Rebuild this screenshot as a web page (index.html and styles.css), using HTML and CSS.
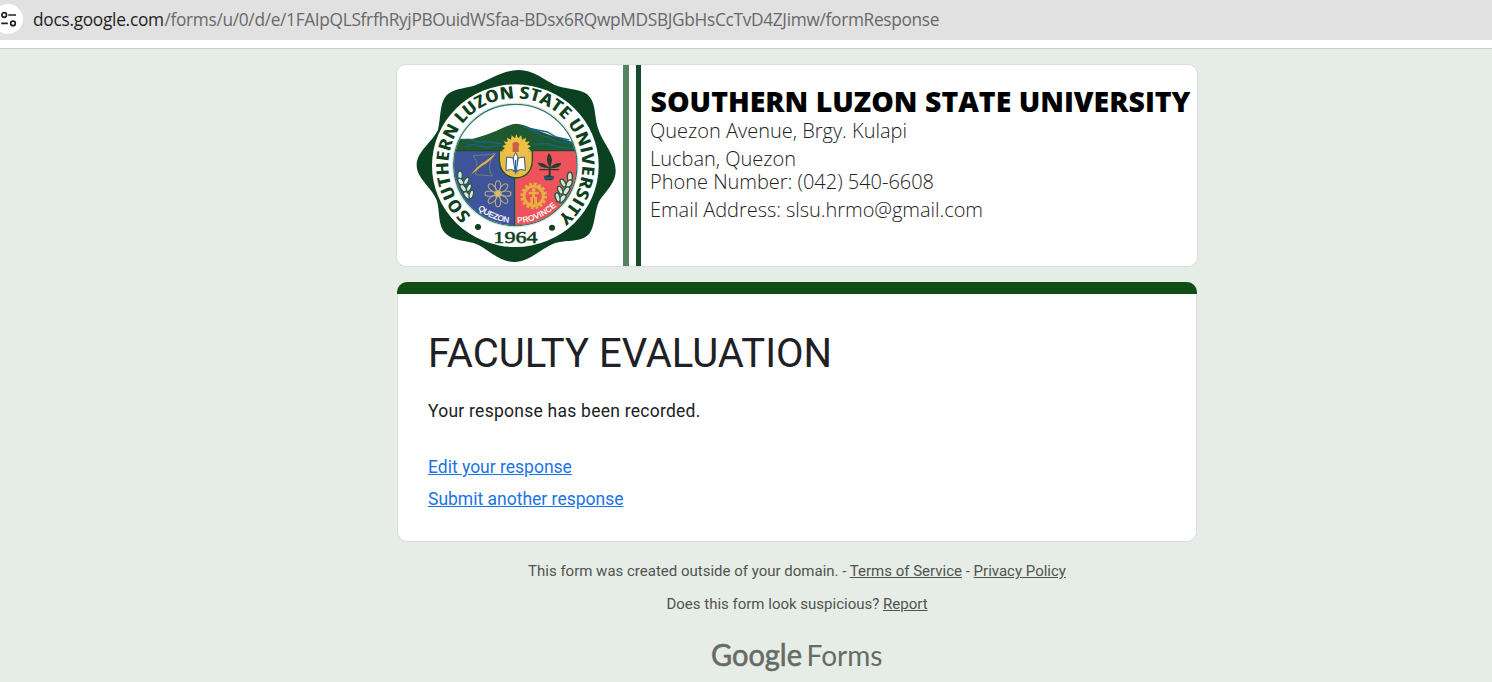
FILE: index.html
```html
<!DOCTYPE html>
<html lang="en">
<head>
<meta charset="utf-8">
<title>Faculty Evaluation</title>
<link rel="stylesheet" href="styles.css">
</head>
<body>
<header class="browser-bar">
  <div class="address">
    <span class="site-info"><svg width="30" height="30" viewBox="0 0 30 30" fill="none" stroke="#1f1f1f" stroke-width="1.7"><circle cx="11.2" cy="11" r="2.3"/><path d="M15.2 11H23M8.3 19.4h6.5"/><circle cx="20" cy="19.4" r="2.3"/></svg></span>
    <svg class="url" width="960" height="40"><text y="26" textLength="131" x="33" class="domain">docs.google.com</text><text x="164.5" y="26" textLength="775">/forms/u/0/d/e/1FAIpQLSfrfhRyjPBOuidWSfaa-BDsx6RQwpMDSBJGbHsCcTvD4ZJimw/formResponse</text></svg>
  </div>
</header>
<main class="page">
  <section class="banner">
    <svg class="seal" width="225" height="201" viewBox="3 15 675 603">
      <defs>
        <path id="ring" d="M358 517A201 201 0 0 1 358 115A201 201 0 0 1 358 517"/>
        <path id="base" d="M184 315A174 174 0 0 0 532 315"/>
        <clipPath id="disc"><ellipse cx="358" cy="315" rx="184" ry="181"/></clipPath>
      </defs>
      <path fill="#0b4120" d="M366 30C410 29 442 58 475 74C505 88 540 84 566 98C603 118 593 168 607 207C620 250 659 285 659 333C659 373 620 402 607 429C594 466 597 497 580 521C555 548 516 538 477 549C435 565 403 605 355 606C310 606 282 572 246 554C210 540 170 544 148 520C124 494 133 457 122 420C107 382 62 356 62 315C62 275 107 248 126 210C135 174 130 125 155 103C180 82 216 87 245 73C286 55 322 31 366 30Z"/>
      <ellipse cx="358" cy="317" rx="250" ry="244" fill="#fff"/>
      <g clip-path="url(#disc)">
        <path fill="#3f539a" d="M160 270H358V510H160z"/>
        <path fill="#ee535b" d="M358 270H560V510H358z"/>
        <path fill="#1e5a2d" d="M160 238L232 236Q265 228 300 213Q342 192 362 191Q379 192 405 204L472 229L560 255V272H160Z"/>
        <path d="M184 238L218 238L245 246L286 246L318 252M207 259L234 253L270 263L312 257M382 200L414 212L430 224L456 232L480 244L540 252M412 252L460 251L484 261L535 265M405 206L454 216L480 231L520 240" fill="none" stroke="#15638b" stroke-width="4"/>
        <path d="M180 272H538M356 350V500" stroke="#24482f" stroke-width="4"/>
      </g>
      <ellipse cx="358" cy="315" rx="185" ry="182" fill="none" stroke="#317469" stroke-width="4"/>
      <ellipse cx="358" cy="315" rx="189" ry="186" fill="none" stroke="#b9d4bd" stroke-width="2"/>
      <path d="M310 272H409V302Q406 350 359 354Q313 349 310 302Z" fill="#e7bd45" stroke="#24502e" stroke-width="4"/>
      <path d="M361 222L366 235L376 226L378 239L390 233L388 246L401 244L394 254L405 258L396 265L405 272L393 277L400 287H322L329 277L317 272L327 265L318 258L330 254L323 244L335 246L333 233L345 239L347 226L357 235Z" fill="#efc048"/>
      <path d="M350 276V257Q346 246 360 245Q374 248 368 261V276Z" fill="#c96143"/>
      <path d="M359 277L365 290V335H353V290Z" fill="#fff" stroke="#315d94" stroke-width="3"/>
      <path d="M332 291L351 294L357 332Q345 326 330 331ZM385 291L367 294L361 332Q374 326 388 331Z" fill="#fff" stroke="#315d94" stroke-width="3"/>
      <path d="M359 300V341" stroke="#34619c" stroke-width="4"/>
      <path d="M232 287L275 284L296 280M232 287Q252 315 237 344L290 348Q267 321 296 281" fill="none" stroke="#6c806c" stroke-width="3"/>
      <path d="M225 344Q240 321 269 303L300 279Q286 303 257 319Z" fill="#e5b143"/>
      <g transform="translate(306 401)" fill="none" stroke="#b8ae78" stroke-width="3.2"><g id="petals"><ellipse cy="-24" rx="8" ry="15"/><ellipse cy="24" rx="8" ry="15"/><ellipse cx="-24" rx="15" ry="8"/><ellipse cx="24" rx="15" ry="8"/></g><use href="#petals" transform="rotate(45)"/><circle r="9" fill="#dfc165"/></g>
      <g fill="#263c2e"><path d="M459 279Q476 298 461 321Q445 299 459 279ZM460 325Q429 323 425 308Q448 307 460 325ZM461 325Q474 308 496 309Q493 326 461 325Z"/><path d="M458 310H464V349H458ZM430 327H490V331H430ZM444 348Q461 342 474 350L469 361H448Z"/></g>
      <path d="M444 354H473" stroke="#24577b" stroke-width="7"/>
      <g fill="none" stroke="#e8af41"><circle cx="413" cy="408" r="29" stroke-width="9"/><circle cx="413" cy="408" r="36" stroke-width="8" stroke-dasharray="8 6.1"/><path stroke-width="8" d="M413 395V415M398 399H428M407 433V411M419 433V411"/></g><circle cx="413" cy="390" r="6" fill="#e8af41"/>
      <g fill="#dce6d9" stroke="#285b45" stroke-width="4"><g id="leaf"><ellipse cx="192" cy="346" rx="7" ry="13"/><ellipse cx="195" cy="366" rx="7" ry="13" transform="rotate(-35 195 366)"/><ellipse cx="211" cy="363" rx="6" ry="12" transform="rotate(30 211 363)"/><ellipse cx="202" cy="385" rx="7" ry="13" transform="rotate(-35 202 385)"/><ellipse cx="219" cy="383" rx="6" ry="12" transform="rotate(25 219 383)"/><ellipse cx="213" cy="406" rx="7" ry="13" transform="rotate(-40 213 406)"/><ellipse cx="226" cy="403" rx="6" ry="13" transform="rotate(15 226 403)"/></g><use href="#leaf" transform="matrix(-1.08 0 0 1.08 729 -23)"/></g>
      <text class="seal-name"><textPath href="#ring" startOffset="145" textLength="980" lengthAdjust="spacingAndGlyphs">SOUTHERN LUZON STATE UNIVERSITY</textPath></text>
      <text class="seal-place"><textPath href="#base" startOffset="151" textLength="102">QUEZON</textPath></text>
      <text class="seal-place"><textPath href="#base" startOffset="280" textLength="130">PROVINCE</textPath></text>
      <text class="seal-year" x="292" y="548" textLength="133" lengthAdjust="spacingAndGlyphs">1964</text>
      <circle cx="246" cy="501" r="9" fill="#0b4120"/><circle cx="468" cy="503" r="9" fill="#0b4120"/>
    </svg>
    <div class="stripes"></div>
    <svg class="contact" width="556" height="201" viewBox="641 65 556 201">
      <text class="university" x="650.5" y="112" textLength="540" lengthAdjust="spacingAndGlyphs">SOUTHERN LUZON STATE UNIVERSITY</text>
      <text x="650" y="138" textLength="257">Quezon Avenue, Brgy. Kulapi</text>
      <text x="650" y="166" textLength="146">Lucban, Quezon</text>
      <text x="650" y="189" textLength="284">Phone Number: (042) 540-6608</text>
      <text x="650" y="217" textLength="333">Email Address: slsu.hrmo@gmail.com</text>
    </svg>
  </section>
  <section class="response">
    <div class="accent"></div>
    <div class="response-body">
      <h1>FACULTY EVALUATION</h1>
      <p>Your response has been recorded.</p>
      <nav><a href="#">Edit your response</a><a href="#">Submit another response</a></nav>
    </div>
  </section>
  <footer>
    <p>This form was created outside of your domain. - <a href="#">Terms of Service</a> - <a href="#">Privacy Policy</a></p>
    <p>Does this form look suspicious? <a href="#">Report</a></p>
    <svg class="brand" width="176" height="44"><text class="google" x="2" y="28" textLength="91" lengthAdjust="spacingAndGlyphs">Google</text><text class="forms" x="97.5" y="28" textLength="76" lengthAdjust="spacingAndGlyphs">Forms</text></svg>
  </footer>
</main>
</body>
</html>
```
FILE: styles.css
```css
* { box-sizing: border-box; }
body { margin: 0; height: 682px; overflow: hidden; background: #e6ede6; font-family: Roboto, sans-serif; color: #202124; }
svg { display: block; flex: none; overflow: visible; }
.browser-bar { height: 49px; background: #fff; border-bottom: 1px solid #c9cdc9; }
.address { display: flex; height: 40px; background: #e1e1e1; }
.site-info { flex: none; width: 30px; height: 30px; margin: 4px -23px 0 -7px; border-radius: 50%; background: #fff; }
.url { font: 17.3px "Open Sans", sans-serif; fill: #68696b; }
.url .domain { fill: #1f1f1f; }
.page { display: flex; flex-direction: column; align-items: center; padding: 15px 0 0 102px; }
.banner { display: flex; width: 802px; height: 203px; border: 1px solid #dadce0; border-radius: 10px; background: #fff; overflow: hidden; }
.stripes { flex: none; width: 20px; margin-left: 1px; background: linear-gradient(90deg, #53845f 0 6px, #fff 6px 13px, #184b29 13px 18.5px, #fff 18.5px); }
.contact { margin-left: -2px; font: 300 20px "Open Sans", sans-serif; fill: #222; }
.university { font-size: 28.5px; font-weight: 800; fill: #000; }
.seal-name { font: bold 51px "Open Sans", sans-serif; font-stretch: 75%; fill: #0b4120; }
.seal-place { font: 24px "Liberation Sans", sans-serif; fill: #fff; stroke: #fff; stroke-width: .7; }
.seal-year { font: 53px "Liberation Serif", serif; fill: #0b4120; stroke: #0b4120; stroke-width: 1.5; }
.response { width: 800px; height: 260px; margin-top: 15px; }
.accent { height: 12px; border-radius: 10px 10px 0 0; background: #104e14; }
.response-body { height: 248px; border: 1px solid #dadce0; border-top: 0; border-radius: 0 0 10px 10px; background: #fff; padding: 33px 30px 0; }
h1 { margin: 0; font-size: 40px; font-weight: 400; line-height: 54px; }
.response p { margin: 18px 0 0; font-size: 17.5px; line-height: 25px; letter-spacing: .25px; }
nav { display: flex; flex-direction: column; align-items: flex-start; gap: 7px; margin-top: 31px; font-size: 17.5px; line-height: 25px; }
nav a { color: #1a73e8; }
footer { display: flex; flex-direction: column; align-items: center; color: #50544f; font-size: 15px; line-height: 18px; }
footer p { margin: 20px 0 0; }
footer p + p { margin-top: 15px; }
footer a { color: inherit; }
.brand { margin-top: 25px; fill: #676b67; font-family: Lato, sans-serif; }
.google { font-size: 30px; stroke: #676b67; stroke-width: .6; }
.forms { font-size: 28px; }
```
